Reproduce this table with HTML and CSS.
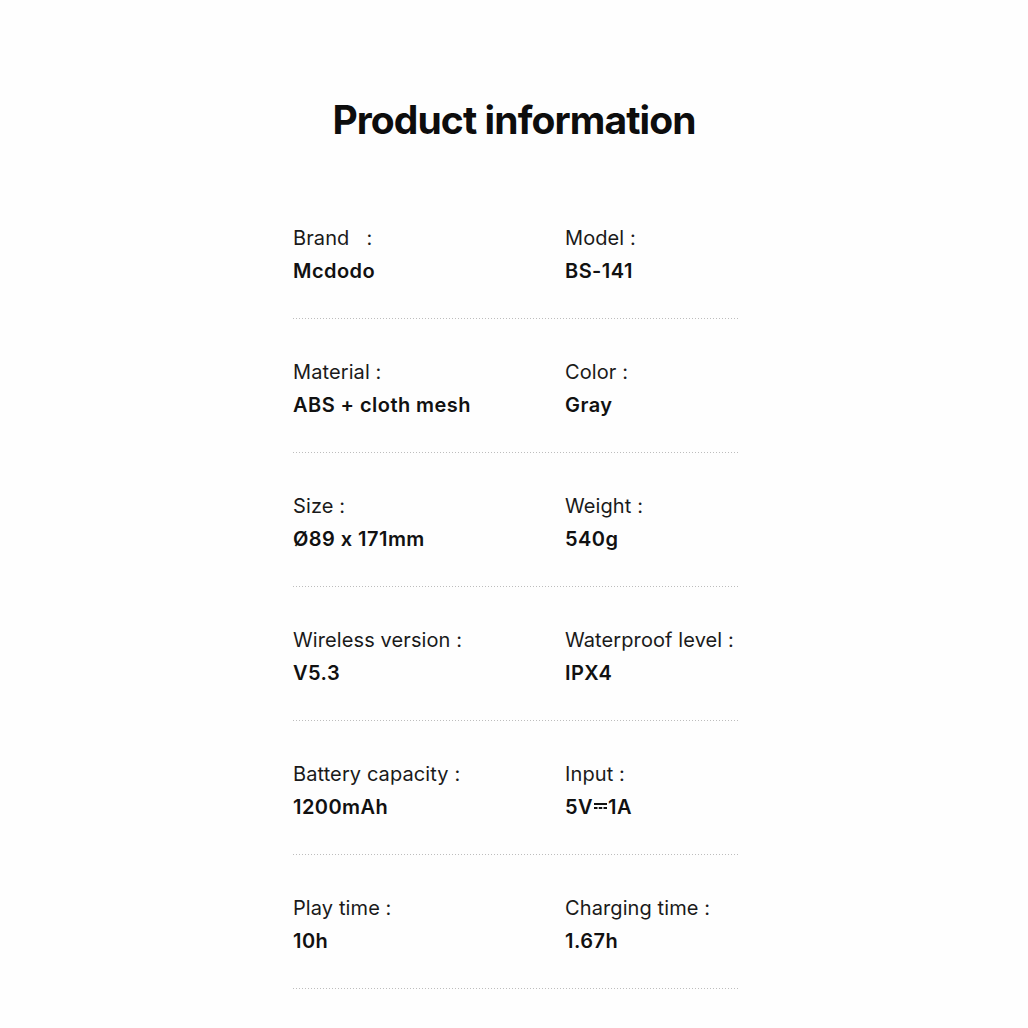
FILE: index.html
```html
<!DOCTYPE html>
<html lang="en">
<head>
<meta charset="utf-8">
<title>Product information</title>
<link rel="stylesheet" href="styles.css">
</head>
<body>
<main class="page">
  <h1 class="title">Product information</h1>
  <section class="specs">
    <div class="row">
      <div class="cell"><div class="label">Brand &nbsp;&nbsp;:</div><div class="value">Mcdodo</div></div>
      <div class="cell"><div class="label">Model :</div><div class="value">BS-141</div></div>
    </div>
    <div class="row">
      <div class="cell"><div class="label">Material :</div><div class="value">ABS + cloth mesh</div></div>
      <div class="cell"><div class="label">Color :</div><div class="value">Gray</div></div>
    </div>
    <div class="row">
      <div class="cell"><div class="label">Size :</div><div class="value">Ø89 x 171mm</div></div>
      <div class="cell"><div class="label">Weight :</div><div class="value">540g</div></div>
    </div>
    <div class="row">
      <div class="cell"><div class="label">Wireless version :</div><div class="value">V5.3</div></div>
      <div class="cell"><div class="label">Waterproof level :</div><div class="value">IPX4</div></div>
    </div>
    <div class="row">
      <div class="cell"><div class="label">Battery capacity :</div><div class="value">1200mAh</div></div>
      <div class="cell"><div class="label">Input :</div><div class="value">5V<svg class="dc" width="13" height="8" viewBox="0 0 13 8" aria-label="DC"><rect x="0" y="1" width="13" height="2" fill="currentColor"/><rect x="0" y="5" width="3.5" height="2" fill="currentColor"/><rect x="4.75" y="5" width="3.5" height="2" fill="currentColor"/><rect x="9.5" y="5" width="3.5" height="2" fill="currentColor"/></svg>1A</div></div>
    </div>
    <div class="row">
      <div class="cell"><div class="label">Play time :</div><div class="value">10h</div></div>
      <div class="cell"><div class="label">Charging time :</div><div class="value">1.67h</div></div>
    </div>
  </section>
</main>
</body>
</html>
```
FILE: styles.css
```css
html, body {
  margin: 0;
  padding: 0;
  background: #fefefe;
}
body {
  font-family: Inter, "Noto Sans", "Liberation Sans", sans-serif;
  font-feature-settings: "calt" 0;
  color: #111;
}
.page {
  width: 446px;
  margin: 0 0 0 293px;
  padding-top: 96px;
}
.title {
  margin: 0 0 0 -2px;
  width: 446px;
  text-align: center;
  font-size: 39px;
  line-height: 48px;
  font-weight: 700;
  letter-spacing: -0.9px;
  color: #0d0d0d;
}
.specs {
  margin-top: 41px;
}
.row {
  display: grid;
  grid-template-columns: 272px 1fr;
  box-sizing: border-box;
  height: 134px;
  padding-top: 41px;
  background-image: linear-gradient(to right, #bdbdbd 1px, transparent 1px);
  background-size: 3px 1px;
  background-repeat: repeat-x;
  background-position: left bottom;
}
.cell {
  display: flex;
  flex-direction: column;
}
.label {
  font-size: 20px;
  line-height: 24px;
  font-weight: 400;
  letter-spacing: 0.1px;
  color: #1a1a1a;
  white-space: nowrap;
}
.value {
  margin-top: 9px;
  font-size: 20px;
  line-height: 24px;
  font-weight: 600;
  letter-spacing: 0.45px;
  color: #111;
  white-space: nowrap;
}
.dc {
  display: inline-block;
  vertical-align: 4px;
  margin: 0 1px;
}
```
